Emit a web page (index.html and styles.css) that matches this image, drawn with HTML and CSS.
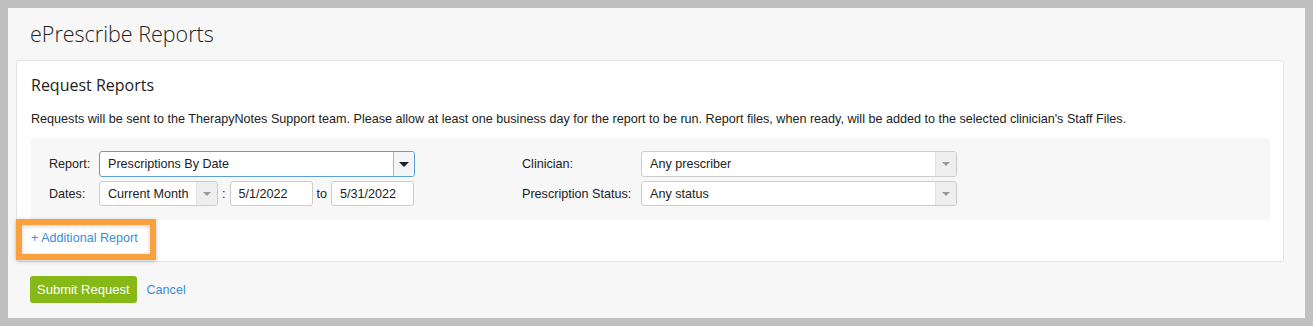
FILE: index.html
```
<!DOCTYPE html>
<html lang="en">
<head>
	<meta charset="utf-8">
	<title>ePrescribe Reports</title>
	<link rel="stylesheet" href="styles.css">
</head>
<body>
<div class="page">
	<h1 class="title">ePrescribe Reports</h1>

	<div class="card">
		<h2 class="card-title">Request Reports</h2>
		<p class="note">Requests will be sent to the TherapyNotes Support team. Please allow at least one business day for the report to be run. Report files, when ready, will be added to the selected clinician's Staff Files.</p>

		<div class="form">
			<label class="lbl">Report:</label>
			<div class="select focus">
				<span class="value">Prescriptions By Date</span>
				<span class="arrow"><i></i></span>
			</div>
			<span></span>
			<label class="lbl">Clinician:</label>
			<div class="select">
				<span class="value">Any prescriber</span>
				<span class="arrow gray"><i></i></span>
			</div>

			<label class="lbl">Dates:</label>
			<div class="dates">
				<div class="select small">
					<span class="value">Current Month</span>
					<span class="arrow gray"><i></i></span>
				</div>
				<span class="sep">:</span>
				<div class="input">5/1/2022</div>
				<span class="sep">to</span>
				<div class="input">5/31/2022</div>
			</div>
			<span></span>
			<label class="lbl">Prescription Status:</label>
			<div class="select">
				<span class="value">Any status</span>
				<span class="arrow gray"><i></i></span>
			</div>
		</div>

		<div class="more">
			<a href="#" class="link">+ Additional Report</a>
			<span class="mark"></span>
		</div>
	</div>

	<div class="actions">
		<button class="submit">Submit Request</button>
		<a href="#" class="link">Cancel</a>
	</div>
</div>
</body>
</html>
```

FILE: styles.css
```
body {
    margin: 0;
    background: #c0c0c0;
    font-family: "Liberation Sans", Arial, sans-serif;
    font-size: 12.6px;
    color: #222;
}

.page {
    margin: 8px;
    height: 310px;
    box-sizing: border-box;
    background: #f7f7f7;
    padding: 10px 21px 0 8px;
}

.title {
    margin: 0 0 0 14px;
    height: 42px;
    font-family: "Open Sans", sans-serif;
    font-weight: 300;
    font-size: 21.5px;
    line-height: 32px;
    color: #222;
}

.card {
    background: #fff;
    border: 1px solid #e3e3e3;
    border-radius: 3px;
    height: 202px;
    box-sizing: border-box;
    padding: 0 13px 0 14px;
}

.card-title {
    margin: 0;
    padding-top: 13px;
    font-family: "Open Sans", sans-serif;
    font-weight: 400;
    font-size: 16px;
    line-height: 22px;
    color: #222;
}

.note {
    margin: 15px 0 0 0;
    line-height: 16px;
    color: #222;
}

.form {
    margin-top: 11px;
    background: #f7f7f7;
    border-radius: 3px;
    height: 82px;
    box-sizing: border-box;
    padding: 13px 0 0 18px;
    display: grid;
    grid-template-columns: 50px 316px 107px 119px 316px;
    grid-template-rows: 26px 25px;
    row-gap: 4px;
    align-items: center;
}

.lbl {
    color: #222;
}

.select {
    display: flex;
    height: 100%;
    box-sizing: border-box;
    border: 1px solid #ccc;
    border-radius: 3px;
    background: #fff;
    overflow: hidden;
}

.select.focus {
    border-color: #5d9ed6;
}

.select.small {
    width: 119px;
}

.value {
    flex: 1;
    padding-left: 8px;
    display: flex;
    align-items: center;
    white-space: nowrap;
}

.arrow {
    width: 20px;
    border-left: 1px solid #ccc;
    background: #f5f5f5;
    display: flex;
    align-items: center;
    justify-content: center;
}

.focus .arrow {
    border-left-color: #9bb8d0;
    background: #f3f5f7;
}

.arrow i {
    width: 0;
    height: 0;
    border-left: 5px solid transparent;
    border-right: 5px solid transparent;
    border-top: 5px solid #222;
}

.arrow.gray {
    background: #eee;
    border-left-color: #e2e2e2;
}

.arrow.gray i {
    border-left-width: 4px;
    border-right-width: 4px;
    border-top: 4px solid #999;
}

.dates {
    display: flex;
    height: 100%;
}

.sep {
    display: flex;
    align-items: center;
    padding: 0 4px;
}

.input {
    width: 83px;
    box-sizing: border-box;
    border: 1px solid #ccc;
    border-radius: 3px;
    background: #fff;
    padding-left: 8px;
    display: flex;
    align-items: center;
}

.more {
    position: relative;
    height: 41px;
    box-sizing: border-box;
    padding-bottom: 5px;
    display: flex;
    align-items: center;
}

.link {
    color: #3b8fd8;
    text-decoration: none;
}

.mark {
    position: absolute;
    left: -15px;
    top: -1px;
    width: 140px;
    height: 41px;
    box-sizing: border-box;
    border: 6px solid #f9a13c;
    box-shadow: 0 1px 4px rgba(0, 0, 0, 0.25), inset 0 1px 4px rgba(0, 0, 0, 0.2);
}

.actions {
    display: flex;
    align-items: center;
    gap: 10px;
    padding: 14px 0 0 14px;
}

.submit {
    height: 27px;
    padding: 0 7px;
    border: none;
    border-radius: 3px;
    background: #86b817;
    color: #fff;
    font-family: "Liberation Sans", Arial, sans-serif;
    font-size: 13px;
    font-weight: 400;
}
```
